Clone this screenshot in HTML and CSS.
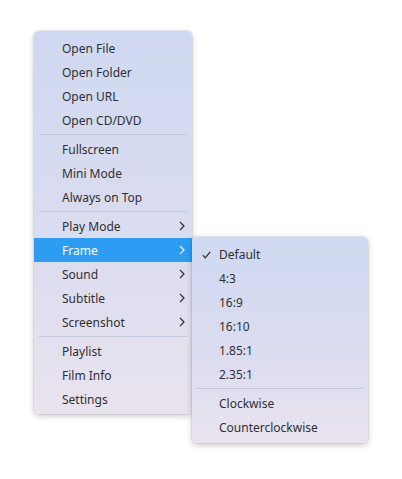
FILE: index.html
```html
<!DOCTYPE html>
<html>
<head>
<meta charset="utf-8">
<link rel="stylesheet" href="styles.css">
</head>
<body>
<div class="stage">
  <div class="menu main">
    <div class="item">Open File</div>
    <div class="item">Open Folder</div>
    <div class="item">Open URL</div>
    <div class="item">Open CD/DVD</div>
    <div class="sep"></div>
    <div class="item">Fullscreen</div>
    <div class="item">Mini Mode</div>
    <div class="item">Always on Top</div>
    <div class="sep"></div>
    <div class="item sub">Play Mode<svg class="arrow" viewBox="0 0 6 10" width="6" height="10"><polyline points="1,1 5,5 1,9"/></svg></div>
    <div class="item sub active">Frame<svg class="arrow" viewBox="0 0 6 10" width="6" height="10"><polyline points="1,1 5,5 1,9"/></svg></div>
    <div class="item sub">Sound<svg class="arrow" viewBox="0 0 6 10" width="6" height="10"><polyline points="1,1 5,5 1,9"/></svg></div>
    <div class="item sub">Subtitle<svg class="arrow" viewBox="0 0 6 10" width="6" height="10"><polyline points="1,1 5,5 1,9"/></svg></div>
    <div class="item sub">Screenshot<svg class="arrow" viewBox="0 0 6 10" width="6" height="10"><polyline points="1,1 5,5 1,9"/></svg></div>
    <div class="sep"></div>
    <div class="item">Playlist</div>
    <div class="item">Film Info</div>
    <div class="item">Settings</div>
  </div>
  <div class="menu submenu">
    <div class="item checked"><svg class="check" viewBox="0 0 9 8" width="9" height="8"><polyline points="0.8,4.2 3.2,6.8 8.2,0.8"/></svg>Default</div>
    <div class="item">4:3</div>
    <div class="item">16:9</div>
    <div class="item">16:10</div>
    <div class="item">1.85:1</div>
    <div class="item">2.35:1</div>
    <div class="sep"></div>
    <div class="item">Clockwise</div>
    <div class="item">Counterclockwise</div>
  </div>
</div>
</body>
</html>
```

FILE: styles.css
```css
html, body {
  margin: 0;
  padding: 0;
  background: #ffffff;
}
body {
  font-family: "Noto Sans", "Open Sans", sans-serif;
  font-size: 12px;
  color: #303030;
}
.stage {
  position: relative;
  width: 402px;
  height: 479px;
  padding: 31px 0 0 34px;
  box-sizing: border-box;
}
.menu {
  background: linear-gradient(180deg, #cfd9f1 0%, #dbdcf0 55%, #e9e3ee 100%);
  border-radius: 5px;
  box-shadow: 0 0 0 1px rgba(0,0,0,0.06), 0 2px 6px rgba(0,0,0,0.22);
  display: flex;
  flex-direction: column;
}
.main {
  width: 158px;
  padding: 5px 0 3px;
  box-sizing: border-box;
}
.submenu {
  position: absolute;
  left: 192px;
  top: 237px;
  width: 176px;
  padding: 5px 0 4px;
  box-sizing: border-box;
}
.item {
  height: 23px;
  line-height: 24px;
  padding: 1px 0 0 28px;
  position: relative;
  white-space: nowrap;
}
.submenu .item {
  padding-left: 27px;
}
.item.active {
  background: #2c9df3;
  color: #ffffff;
}
.arrow {
  position: absolute;
  right: 7px;
  top: 7px;
  fill: none;
  stroke: #2c2c2c;
  stroke-width: 1.2;
}
.active .arrow {
  stroke: #ffffff;
}
.check {
  position: absolute;
  left: 10px;
  top: 9px;
  fill: none;
  stroke: #2c2c2c;
  stroke-width: 1.2;
}
.sep {
  height: 1px;
  margin: 2px 5px;
  background: #c2c6d9;
}
```
